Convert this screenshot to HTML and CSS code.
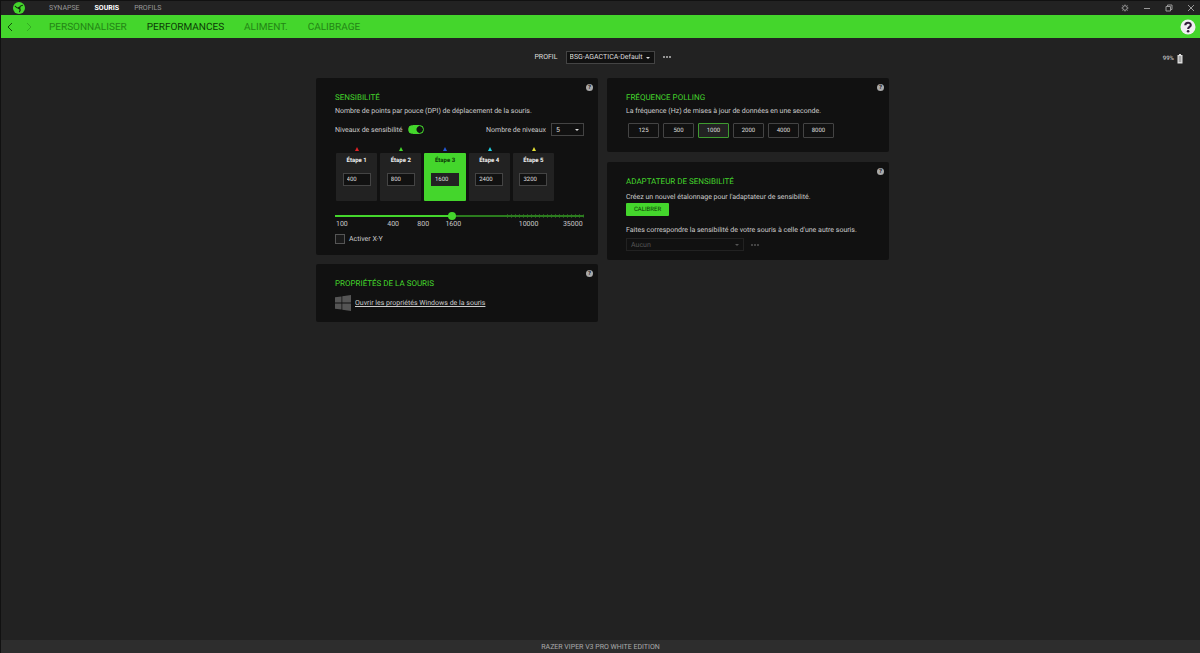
FILE: index.html
```html
<!DOCTYPE html>
<html lang="fr">
<head>
<meta charset="utf-8">
<meta name="viewport" content="width=device-width, initial-scale=1">
<title>Synapse – Performances</title>
<link rel="stylesheet" href="styles.css">
</head>
<body>
<div class="app">
  <header class="titlebar">
    <svg class="logo" viewBox="0 0 24 24" aria-hidden="true"><circle cx="12" cy="12" r="12" fill="#44d62c"/><path d="M4.500 8.500C7 12 9.500 13 12.500 12C13.500 9 15.500 7 19 6.500M12.500 12C14.500 14 14.500 17 13 19.500" fill="none" stroke="#122b0e" stroke-width="2.200" stroke-linecap="round"/><circle cx="12.500" cy="12" r="2.400" fill="#122b0e"/></svg>
    <nav class="tabs">
      <a href="#synapse">SYNAPSE</a>
      <a href="#souris" class="current">SOURIS</a>
      <a href="#profils">PROFILS</a>
    </nav>
    <div class="window-buttons">
      <button type="button" aria-label="Paramètres"><svg viewBox="0 0 8 8"><circle cx="4" cy="4" r="2.300"/><path d="M4 .6v1M4 6.400v1M.6 4h1M6.400 4h1M1.500 1.500l.8.8M5.700 5.700l.8.8M6.500 1.500l-.8.8M2.300 5.700l-.8.8"/></svg></button>
      <button type="button" aria-label="Réduire"><svg viewBox="0 0 8 8"><path d="M1 4.500h6"/></svg></button>
      <button type="button" aria-label="Restaurer"><svg viewBox="0 0 8 8"><path d="M1 2.500h4.500v4.500H1zM2.500 2.500v-1.500h4.500v4.500H5.500"/></svg></button>
      <button type="button" aria-label="Fermer"><svg viewBox="0 0 8 8"><path d="M1 1l6 6M7 1l-6 6"/></svg></button>
    </div>
  </header>

  <div class="subnav">
    <div class="history">
      <button type="button" aria-label="Précédent"><svg viewBox="0 0 6 10"><path d="M5 1L1 5l4 4"/></svg></button>
      <button type="button" aria-label="Suivant" disabled><svg viewBox="0 0 6 10"><path d="M1 1l4 4-4 4"/></svg></button>
    </div>
    <nav class="sections">
      <a href="#personnaliser">PERSONNALISER</a>
      <a href="#performances" class="current">PERFORMANCES</a>
      <a href="#aliment">ALIMENT.</a>
      <a href="#calibrage">CALIBRAGE</a>
    </nav>
    <button type="button" class="help-main" aria-label="Aide"><svg viewBox="0 0 16 16"><circle cx="8" cy="8" r="7.500" fill="#f0eef2"/><path d="M5.300 6.200C5.300 2.900 10.800 2.900 10.800 6C10.800 8 8.100 7.800 8.100 10" fill="none" stroke="#33203c" stroke-width="2.100"/><circle cx="8.100" cy="12.200" r="1.300" fill="#33203c"/></svg></button>
  </div>

  <main class="main">
    <div class="profile">
      <label for="profil">PROFIL</label>
      <span class="select select-profile"><select id="profil"><option>BSG-AGACTICA-Default</option></select></span>
      <button type="button" class="more" aria-label="Plus"><i></i><i></i><i></i></button>
    </div>
    <div class="battery"><span>99%</span><svg viewBox="0 0 6 10" aria-hidden="true"><path d="M2 0h2v1h1.500v8.500h-5V1H2z" fill="#ddd"/><path d="M1.700 3h2.600M1.700 5h2.600M1.700 7h2.600" stroke="#555" stroke-width=".8"/></svg></div>

    <div class="columns">
      <div class="column">
        <section class="card">
          <button type="button" class="help" aria-label="Aide sensibilité">?</button>
          <h2>SENSIBILITÉ</h2>
          <p>Nombre de points par pouce (DPI) de déplacement de la souris.</p>
          <div class="levels">
            <label for="niveaux">Niveaux de sensibilité</label>
            <input type="checkbox" role="switch" id="niveaux" class="switch" checked>
            <label for="nombre" class="levels-count">Nombre de niveaux</label>
            <span class="select select-count"><select id="nombre"><option>5</option></select></span>
          </div>
          <div class="stages">
            <div class="stage red"><label for="e1">Étape 1</label><input id="e1" type="text" value="400"></div>
            <div class="stage green"><label for="e2">Étape 2</label><input id="e2" type="text" value="800"></div>
            <div class="stage blue active"><label for="e3">Étape 3</label><input id="e3" type="text" value="1600"></div>
            <div class="stage cyan"><label for="e4">Étape 4</label><input id="e4" type="text" value="2400"></div>
            <div class="stage yellow"><label for="e5">Étape 5</label><input id="e5" type="text" value="3200"></div>
          </div>
          <input type="range" class="slider" min="0" max="100" value="47" aria-label="Sensibilité en DPI">
          <div class="scale"><span>100</span><span>400</span><span>800</span><span>1600</span><span>10000</span><span>35000</span></div>
          <div class="check"><input type="checkbox" id="xy"><label for="xy">Activer X-Y</label></div>
        </section>

        <section class="card">
          <button type="button" class="help" aria-label="Aide propriétés">?</button>
          <h2>PROPRIÉTÉS DE LA SOURIS</h2>
          <div class="windows">
            <svg viewBox="0 0 16 16" aria-hidden="true"><path d="M0 2.300L6.500 1.400V7.600H0zM7.300 1.300L16 0v7.600H7.300zM0 8.400h6.500v6.200L0 13.700zM7.300 8.400H16V16l-8.700-1.300z" fill="#555"/></svg>
            <a href="#windows">Ouvrir les propriétés Windows de la souris</a>
          </div>
        </section>
      </div>

      <div class="column">
        <section class="card card-polling">
          <button type="button" class="help" aria-label="Aide polling">?</button>
          <h2>FRÉQUENCE POLLING</h2>
          <p>La fréquence (Hz) de mises à jour de données en une seconde.</p>
          <div class="rates">
            <button type="button">125</button>
            <button type="button">500</button>
            <button type="button" class="selected">1000</button>
            <button type="button">2000</button>
            <button type="button">4000</button>
            <button type="button">8000</button>
          </div>
        </section>

        <section class="card card-adapter">
          <button type="button" class="help" aria-label="Aide adaptateur">?</button>
          <h2>ADAPTATEUR DE SENSIBILITÉ</h2>
          <p>Créez un nouvel étalonnage pour l'adaptateur de sensibilité.</p>
          <button type="button" class="calibrate">CALIBRER</button>
          <label for="autre" class="match">Faites correspondre la sensibilité de votre souris à celle d'une autre souris.</label>
          <div class="match-row">
            <span class="select select-match"><select id="autre" disabled><option>Aucun</option></select></span>
            <button type="button" class="more" aria-label="Plus" disabled><i></i><i></i><i></i></button>
          </div>
        </section>
      </div>
    </div>
  </main>

  <footer class="footer">RAZER VIPER V3 PRO WHITE EDITION</footer>
</div>
</body>
</html>
```
FILE: styles.css
```css
* { box-sizing: border-box; }
body { margin: 0; background: #222; color: #ccc; font-family: Roboto, "Liberation Sans", sans-serif; font-size: 7px; line-height: 10px; text-rendering: geometricPrecision; }
button, input, select { font: inherit; color: inherit; margin: 0; padding: 0; text-rendering: inherit; }
button { background: none; border: 0; }
a { color: inherit; text-decoration: none; }
svg { display: block; }
.app { min-height: 100vh; display: flex; flex-direction: column; border-left: 1px solid #111; }

.titlebar { display: flex; align-items: center; height: 15px; padding: 0 5px 0 12px; border-top: 1px solid #111; }
.logo { width: 12px; height: 12px; margin-right: 24px; }
.tabs { display: flex; gap: 15px; color: #999; }
.tabs .current { color: #fff; font-weight: 700; }
.window-buttons { display: flex; gap: 14px; margin-left: auto; }
.window-buttons svg { width: 8px; height: 8px; fill: none; stroke: #999; stroke-width: 1; }

.subnav { display: flex; align-items: center; height: 23px; padding: 0 4px 0 6px; background: #44d62c; }
.history { display: flex; gap: 13px; width: 42px; }
.history svg { width: 6px; height: 10px; fill: none; stroke: #124d0a; }
.history button:disabled { opacity: .3; }
.sections { display: flex; gap: 20px; padding-top: 3px; font-size: 10px; line-height: 12px; color: #238515; }
.sections .current { color: #0c3a06; }
.help-main { margin-left: auto; }
.help-main svg { width: 16px; height: 16px; }

.main { position: relative; flex: 1; padding: 12px 5px 12px 9px; }
.profile { display: flex; align-items: center; justify-content: center; gap: 8px; height: 14px; color: #ddd; }
.select { position: relative; display: inline-flex; }
.select select { appearance: none; width: 100%; height: 13px; padding: 0 10px 0 4px; border: 1px solid #444; border-radius: 0; background: #111; color: #ddd; }
.select::after { content: ""; position: absolute; right: 5px; top: 6px; border: 2px solid transparent; border-top-color: #ddd; border-bottom: 0; pointer-events: none; }
.select-profile { width: 89px; }
.select-profile select { padding-left: 3px; }
.more { display: flex; gap: 1px; }
.more i { width: 2px; height: 2px; border-radius: 1px; background: #bbb; }
.battery { position: absolute; top: 16px; right: 17px; display: flex; align-items: center; gap: 3px; font-size: 6px; color: #ddd; }
.battery svg { width: 6px; height: 10px; }

.columns { display: grid; grid-template-columns: repeat(2, minmax(0, 282px)); gap: 9px; justify-content: center; align-items: start; margin-top: 14px; }
.column { display: grid; gap: 9px; }
.card { position: relative; padding: 15px 14px 11px 19px; background: #111; border-radius: 2px; }
.card h2 { margin: 0 0 3px; font-size: 8px; line-height: 10px; font-weight: 400; color: #44d62c; }
.card p { margin: 0; }
.help { position: absolute; top: 6px; right: 5px; width: 7px; height: 7px; border-radius: 50%; background: #aaa; color: #222; font-size: 6px; line-height: 7px; font-weight: 700; text-align: center; }

.levels { display: flex; align-items: center; gap: 5px; margin-top: 7px; }
.switch { appearance: none; width: 16px; height: 9px; border-radius: 5px; border: 1px solid #44d62c; background: radial-gradient(circle at 11px 50%, #111 3px, #44d62c 4px); }
.levels-count { margin-left: auto; }
.select-count { width: 33px; }
.stages { display: flex; gap: 3px; margin: 17px 30px 0 1px; }
.stage { position: relative; flex: 1; height: 48px; padding-top: 3px; display: flex; flex-direction: column; align-items: center; gap: 7px; background: #222; border-radius: 1px; font-size: 6px; color: #eee; }
.stage label { font-weight: 700; }
.stage input { width: 28px; height: 13px; padding: 0 3px; border: 1px solid #444; background: #111; color: #ddd; }
.stage::before { content: ""; position: absolute; top: -6px; left: 19px; border: 2px solid transparent; border-top: 0; border-bottom: 4px solid var(--mark); }
.red { --mark: #e02226; }
.green { --mark: #44d62c; }
.blue { --mark: #2358d8; }
.cyan { --mark: #22cfe0; }
.yellow { --mark: #e4e034; }
.stage.active { background: #44d62c; color: #0c3a06; }
.stage.active input { border-color: #222; background: #222; }

.slider { appearance: none; display: block; width: 100%; height: 8px; margin-top: 11px; background:
  linear-gradient(#44d62c, #44d62c) 0 3px / 47% 2px no-repeat,
  linear-gradient(#2b7c1e, #2b7c1e) 0 3px / 100% 2px no-repeat,
  repeating-linear-gradient(to left, #285020 0 1px, transparent 1px 4px) right 2px / 32% 4px no-repeat; }
.slider::-webkit-slider-thumb { appearance: none; width: 8px; height: 8px; border-radius: 50%; background: #44d62c; }
.slider::-moz-range-thumb { width: 8px; height: 8px; border: 0; border-radius: 50%; background: #44d62c; }
.scale { display: grid; grid-template-columns: 51fr 30fr 28fr 73fr 44fr 21fr; padding-left: 1px; line-height: 9px; }
.check { display: flex; align-items: center; gap: 4px; margin-top: 5px; }
.check input { appearance: none; width: 10px; height: 10px; border: 1px solid #555; background: #1a1a1a; }

.windows { display: flex; align-items: center; gap: 4px; margin-top: 6px; }
.windows svg { width: 16px; height: 16px; }
.windows a { text-decoration: underline; }

.card-polling { padding-bottom: 14px; }
.rates { display: flex; gap: 4px; margin: 7px 0 0 2px; }
.rates button { width: 31px; height: 15px; border: 1px solid #444; border-radius: 1px; font-size: 6px; color: #ddd; }
.rates .selected { border-color: #3f9a30; background: #222; }
.card-adapter { margin-top: 1px; padding-bottom: 9px; }
.card-adapter h2 { margin-bottom: 5px; }
.calibrate { display: block; width: 43px; height: 13px; margin: 1px 0 9px; border-radius: 1px; background: #44d62c; color: #0c3a06; font-size: 6px; }
.match { display: block; }
.match-row { display: flex; align-items: center; gap: 7px; margin-top: 3px; }
.select-match { width: 118px; }
.match-row select { border-color: #222; color: #555; opacity: 1; }
.match-row .select::after { border-top-color: #555; }
.match-row .more i { background: #555; }

.footer { height: 13px; background: #2d2d2d; color: #aaa; line-height: 14px; text-align: center; }
```
